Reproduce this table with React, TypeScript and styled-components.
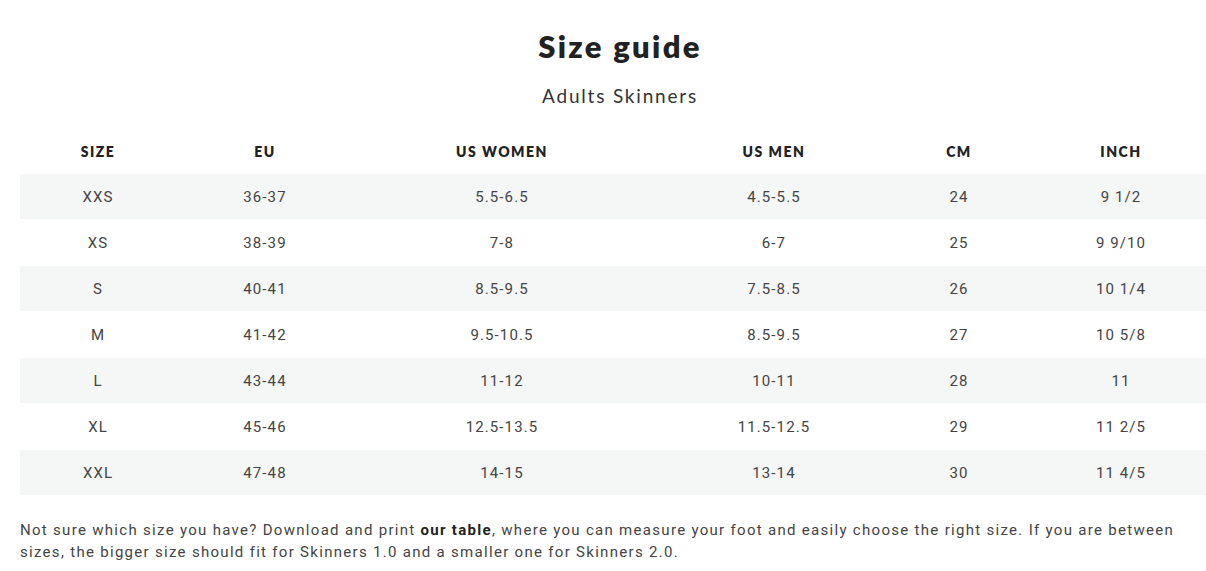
import React from 'react';
import styled, { createGlobalStyle } from 'styled-components';

const GlobalStyle = createGlobalStyle`
  * { box-sizing: border-box; }
  body {
    margin: 0;
    background: #ffffff;
    font-family: Lato, 'Open Sans', Arial, sans-serif;
    color: #333;
    overflow: hidden;
  }
`;

const Page = styled.div`
  padding: 27px 0 0 20px;
  width: 1206px;
  overflow: hidden;
`;

const Header = styled.header`
  width: 1200px;
  text-align: center;
`;

const Title = styled.h1`
  margin: 0;
  font-size: 31px;
  line-height: 38px;
  font-weight: 800;
  color: #222;
  letter-spacing: 2.3px;
`;

const Subtitle = styled.h2`
  margin: 19px 0 0;
  font-size: 19px;
  line-height: 24px;
  font-weight: 400;
  color: #333;
  letter-spacing: 1.8px;
`;

const Table = styled.table`
  margin-top: 21px;
  width: 1202px;
  border-collapse: separate;
  border-spacing: 0;
  table-layout: fixed;
`;

const HeadCell = styled.th`
  height: 45px;
  padding: 0;
  text-align: center;
  font-size: 14px;
  font-weight: 800;
  letter-spacing: 1.5px;
  color: #222;
  text-transform: uppercase;
`;

const Row = styled.tr<{ $striped: boolean }>`
  background: ${({ $striped }) => ($striped ? '#f5f6f6' : 'transparent')};
`;

const Cell = styled.td`
  height: 46px;
  padding: 0;
  border-bottom: 1px solid #fff;
  text-align: center;
  font-family: Roboto, Arial, sans-serif;
  font-size: 15px;
  letter-spacing: 1.1px;
  color: #444;
`;

const Note = styled.p`
  margin: 23px 0 0;
  width: 1186px;
  font-family: Roboto, Arial, sans-serif;
  font-size: 15px;
  line-height: 22px;
  letter-spacing: 1.3px;
  color: #444;

  b {
    font-weight: 700;
    color: #222;
  }
`;

const columns = [
  { label: 'Size', width: 156 },
  { label: 'EU', width: 178 },
  { label: 'US Women', width: 296 },
  { label: 'US Men', width: 248 },
  { label: 'CM', width: 122 },
  { label: 'Inch', width: 202 },
];

const rows = [
  ['XXS', '36-37', '5.5-6.5', '4.5-5.5', '24', '9 1/2'],
  ['XS', '38-39', '7-8', '6-7', '25', '9 9/10'],
  ['S', '40-41', '8.5-9.5', '7.5-8.5', '26', '10 1/4'],
  ['M', '41-42', '9.5-10.5', '8.5-9.5', '27', '10 5/8'],
  ['L', '43-44', '11-12', '10-11', '28', '11'],
  ['XL', '45-46', '12.5-13.5', '11.5-12.5', '29', '11 2/5'],
  ['XXL', '47-48', '14-15', '13-14', '30', '11 4/5'],
];

export default function App() {
  return (
    <>
      <GlobalStyle />
      <Page>
        <Header>
          <Title>Size guide</Title>
          <Subtitle>Adults Skinners</Subtitle>
        </Header>
        <Table>
          <colgroup>
            {columns.map(c => (
              <col key={c.label} style={{ width: c.width }} />
            ))}
          </colgroup>
          <thead>
            <tr>
              {columns.map(c => (
                <HeadCell key={c.label}>{c.label}</HeadCell>
              ))}
            </tr>
          </thead>
          <tbody>
            {rows.map((r, i) => (
              <Row key={r[0]} $striped={i % 2 === 0}>
                {r.map((v, j) => (
                  <Cell key={j}>{v}</Cell>
                ))}
              </Row>
            ))}
          </tbody>
        </Table>
        <Note>
          Not sure which size you have? Download and print <b>our table</b>, where you can measure your foot and
          easily choose the right size. If you are between sizes, the bigger size should fit for Skinners 1.0 and a
          smaller one for Skinners 2.0.
        </Note>
      </Page>
    </>
  );
}
